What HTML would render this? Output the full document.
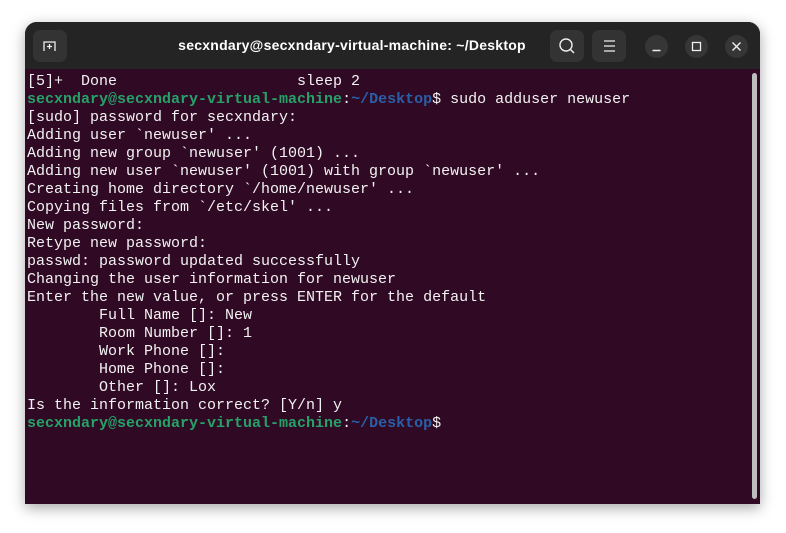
<!DOCTYPE html>
<html><head><style>
html,body{margin:0;padding:0;width:786px;height:533px;background:#fff;overflow:hidden}
.win{position:absolute;left:25px;top:22px;width:735px;height:482px;border-radius:12px 12px 0 0;overflow:hidden;background:#300a24;box-shadow:0 4px 14px rgba(0,0,0,.35)}
.hdr{position:absolute;left:0;top:0;width:100%;height:47px;background:#242424}
.btn{position:absolute;top:8px;width:34px;height:32px;border-radius:7px;background:#333}
.circ{position:absolute;top:13px;width:23px;height:23px;border-radius:50%;background:#363636}
.title{position:absolute;left:127px;width:400px;top:15px;text-align:center;color:#fff;font:bold 14px "Liberation Sans",sans-serif;letter-spacing:0.25px;white-space:nowrap}
pre{position:absolute;left:2px;top:51px;margin:0;font:15px/18px "Liberation Mono",monospace;color:#f2f2f2}
.g{color:#26a269;font-weight:bold}.b{color:#2a5fa8;font-weight:bold}
.sb{position:absolute;left:727px;top:51px;width:5px;height:426px;border-radius:3px;background:#bdbdbd}
</style></head><body>
<div class="win">
<div class="hdr">
<div class="btn" style="left:8px"><svg width="34" height="32"><path d="M11 21 V12 H22 V21 M14 16.5 H19 M16.5 14 V19" stroke="#eee" stroke-width="1.3" fill="none"/></svg></div>
<div class="title">secxndary@secxndary-virtual-machine: ~/Desktop</div>
<div class="btn" style="left:525px"><svg width="34" height="32"><circle cx="16" cy="15" r="6" stroke="#eee" stroke-width="1.4" fill="none"/><path d="M20.5 19.5 L24 23" stroke="#eee" stroke-width="1.5"/></svg></div>
<div class="btn" style="left:567px"><svg width="34" height="32"><path d="M12 11H23M12 16H23M12 21H23" stroke="#eee" stroke-width="1.3"/></svg></div>
<div class="circ" style="left:620px"><svg width="23" height="23"><path d="M7.5 15.5H15.5" stroke="#eee" stroke-width="1.4"/></svg></div>
<div class="circ" style="left:660px"><svg width="23" height="23"><rect x="7.5" y="7.5" width="8" height="8" stroke="#eee" stroke-width="1.3" fill="none"/></svg></div>
<div class="circ" style="left:700px"><svg width="23" height="23"><path d="M7.5 7.5L15.5 15.5M15.5 7.5L7.5 15.5" stroke="#eee" stroke-width="1.4"/></svg></div>
</div>
<pre>[5]+  Done                    sleep 2
<span class="g">secxndary@secxndary-virtual-machine</span>:<span class="b">~/Desktop</span>$ sudo adduser newuser
[sudo] password for secxndary: 
Adding user `newuser' ...
Adding new group `newuser' (1001) ...
Adding new user `newuser' (1001) with group `newuser' ...
Creating home directory `/home/newuser' ...
Copying files from `/etc/skel' ...
New password: 
Retype new password: 
passwd: password updated successfully
Changing the user information for newuser
Enter the new value, or press ENTER for the default
	Full Name []: New
	Room Number []: 1
	Work Phone []: 
	Home Phone []: 
	Other []: Lox
Is the information correct? [Y/n] y
<span class="g">secxndary@secxndary-virtual-machine</span>:<span class="b">~/Desktop</span>$ </pre>
<div class="sb"></div>
</div>
</body></html>
